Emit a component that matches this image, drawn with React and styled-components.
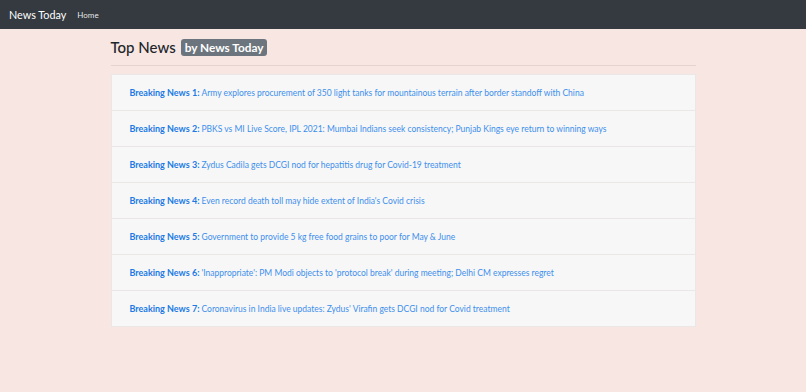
import React from 'react'
import styled, { createGlobalStyle } from 'styled-components'

const GlobalStyle = createGlobalStyle`
  html, body {
    margin: 0;
    padding: 0;
    background: #f8e6e3;
    font-family: Lato, "Open Sans", sans-serif;
  }
`

const Navbar = styled.nav`
  height: 29px;
  background: #343a40;
  display: flex;
  align-items: center;
  padding: 0 9px;
`

const Brand = styled.a`
  color: #fff;
  font-size: 10.8px;
  margin-right: 11px;
  text-decoration: none;
`

const NavLink = styled.a`
  color: rgba(255, 255, 255, 0.9);
  font-size: 8px;
  text-decoration: none;
`

const Container = styled.main`
  width: 585px;
  margin: 0 auto;
  padding-top: 9px;
`

const Heading = styled.h1`
  margin: 0;
  display: flex;
  align-items: center;
  gap: 5px;
  font-size: 15px;
  font-weight: 500;
  color: #212529;
  height: 18px;
`

const Badge = styled.span`
  background: #6c757d;
  color: #fff;
  font-size: 11.8px;
  font-weight: 700;
  padding: 2px 4px;
  border-radius: 3px;
  line-height: 13px;
`

const Rule = styled.hr`
  margin: 9px 0 8px;
  border: 0;
  border-top: 1px solid rgba(0, 0, 0, 0.08);
`

const List = styled.ul`
  list-style: none;
  margin: 0;
  padding: 0;
  border: 1px solid #ebe7e7;
`

const Item = styled.li`
  height: 34px;
  display: flex;
  align-items: center;
  padding: 1px 18px 0;
  background: #f7f7f7;
  & + & {
    border-top: 1px solid #ebe7e7;
  }
`

const Line = styled.p`
  margin: 0;
  font-size: 8.5px;
  line-height: 12px;
`

const Label = styled.strong`
  color: #1a7ae6;
  font-weight: 700;
  font-size: 9px;
  margin-right: 2px;
`

const Headline = styled.a`
  color: #3d8fed;
  text-decoration: none;
`

const news = [
  'Army explores procurement of 350 light tanks for mountainous terrain after border standoff with China',
  'PBKS vs MI Live Score, IPL 2021: Mumbai Indians seek consistency; Punjab Kings eye return to winning ways',
  'Zydus Cadila gets DCGI nod for hepatitis drug for Covid-19 treatment',
  "Even record death toll may hide extent of India's Covid crisis",
  'Government to provide 5 kg free food grains to poor for May & June',
  "'Inappropriate': PM Modi objects to 'protocol break' during meeting; Delhi CM expresses regret",
  "Coronavirus in India live updates: Zydus' Virafin gets DCGI nod for Covid treatment",
]

export default function App() {
  return (
    <>
      <GlobalStyle />
      <Navbar>
        <Brand href="#">News Today</Brand>
        <NavLink href="#">Home</NavLink>
      </Navbar>
      <Container>
        <Heading>
          Top News <Badge>by News Today</Badge>
        </Heading>
        <Rule />
        <List>
          {news.map((title, i) => (
            <Item key={i}>
              <Line>
                <Label>Breaking News {i + 1}:</Label>
                <Headline href="#">{title}</Headline>
              </Line>
            </Item>
          ))}
        </List>
      </Container>
    </>
  )
}
